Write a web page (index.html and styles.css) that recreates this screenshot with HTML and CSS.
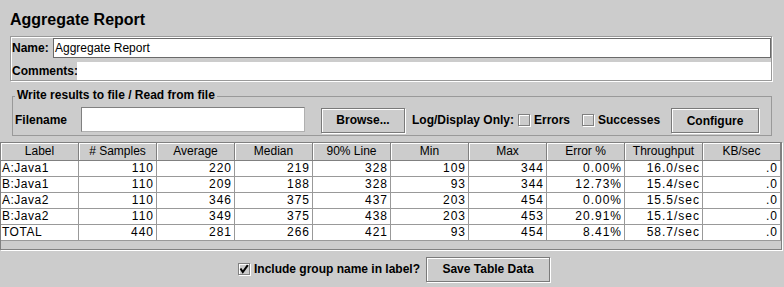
FILE: index.html
```html
<!DOCTYPE html>
<html>
<head>
<meta charset="utf-8">
<title>Aggregate Report</title>
<link rel="stylesheet" href="styles.css">
</head>
<body>
<div class="title">Aggregate Report</div>

<div class="name-panel">
  <div class="row name-row">
    <span class="lbl name-lbl">Name:</span>
    <div class="name-field">Aggregate Report</div>
  </div>
  <div class="row comments-row">
    <span class="lbl comments-lbl">Comments:</span>
    <div class="comments-field"></div>
  </div>
</div>

<fieldset class="file-panel">
  <legend>Write results to file / Read from file</legend>
  <div class="file-row">
    <span class="lbl filename-lbl">Filename</span>
    <div class="file-field"></div>
    <button class="btn browse">Browse...</button>
    <span class="lbl log-lbl">Log/Display Only:</span>
    <span class="check"></span><span class="lbl check-text errors">Errors</span>
    <span class="check"></span><span class="lbl check-text successes">Successes</span>
    <button class="btn configure">Configure</button>
  </div>
</fieldset>

<div class="table-pane">
  <table class="report">
    <colgroup>
      <col class="c"><col class="c"><col class="c"><col class="c"><col class="c">
      <col class="c"><col class="c"><col class="c"><col class="c"><col class="c">
    </colgroup>
    <thead>
      <tr>
        <th>Label</th><th># Samples</th><th>Average</th><th>Median</th><th>90% Line</th>
        <th>Min</th><th>Max</th><th>Error %</th><th>Throughput</th><th>KB/sec</th>
      </tr>
    </thead>
    <tbody>
      <tr><td class="name">A:Java1</td><td>110</td><td>220</td><td>219</td><td>328</td><td>109</td><td>344</td><td>0.00%</td><td>16.0/sec</td><td>.0</td></tr>
      <tr><td class="name">B:Java1</td><td>110</td><td>209</td><td>188</td><td>328</td><td>93</td><td>344</td><td>12.73%</td><td>15.4/sec</td><td>.0</td></tr>
      <tr><td class="name">A:Java2</td><td>110</td><td>346</td><td>375</td><td>437</td><td>203</td><td>454</td><td>0.00%</td><td>15.5/sec</td><td>.0</td></tr>
      <tr><td class="name">B:Java2</td><td>110</td><td>349</td><td>375</td><td>438</td><td>203</td><td>453</td><td>20.91%</td><td>15.1/sec</td><td>.0</td></tr>
      <tr><td class="name">TOTAL</td><td>440</td><td>281</td><td>266</td><td>421</td><td>93</td><td>454</td><td>8.41%</td><td>58.7/sec</td><td>.0</td></tr>
    </tbody>
  </table>
</div>

<div class="bottom-row">
  <span class="check checked"><svg width="10" height="10" viewBox="0 0 10 10"><path d="M1.5 4.5 L3.8 8 L8.8 1.2" fill="none" stroke="#000" stroke-width="2"/></svg></span>
  <span class="lbl group-text">Include group name in label?</span>
  <button class="btn save">Save Table Data</button>
</div>
</body>
</html>
```

FILE: styles.css
```css
html, body {
  margin: 0;
  padding: 0;
  background: #cccccc;
}

body {
  width: 784px;
  height: 287px;
  overflow: hidden;
  font-family: "Liberation Sans", Arial, sans-serif;
  font-size: 12px;
  color: #000;
}

.title {
  font-size: 16px;
  font-weight: bold;
  line-height: 20px;
  height: 20px;
  padding: 10px 0 0 10px;
}

.lbl {
  font-weight: bold;
  white-space: nowrap;
}

/* Name / comments panel */
.name-panel {
  margin: 6px 12px 0 10px;
  border: 1px solid #999999;
  box-shadow: inset 1px 1px 0 #ffffff, 1px 1px 0 #ffffff;
  padding: 1px 0 0 1px;
}

.row {
  display: flex;
  align-items: center;
}

.name-row {
  height: 20px;
}

.comments-row {
  height: 18px;
  margin-top: 4px;
}

.name-lbl {
  width: 41px;
  flex: none;
}

.comments-lbl {
  width: 65px;
  flex: none;
}

.name-field {
  flex: 1;
  height: 20px;
  box-sizing: border-box;
  background: #ffffff;
  border: 1px solid #6a6a6a;
  padding-left: 1px;
  line-height: 18px;
}

.comments-field {
  flex: 1;
  height: 18px;
  background: #ffffff;
}

/* File panel */
.file-panel {
  margin: 8px 12px 0 12px;
  padding: 4px 2px 2px 2px;
  border: 1px solid #999999;
  min-width: 0;
}

.file-panel legend {
  font-weight: bold;
  line-height: 12px;
  padding: 0 2px 2px 2px;
}

.file-row {
  display: flex;
  align-items: center;
  height: 26px;
}

.filename-lbl {
  width: 66px;
  flex: none;
}

.file-field {
  width: 224px;
  height: 25px;
  box-sizing: border-box;
  align-self: flex-start;
  background: #ffffff;
  border: 1px solid;
  border-color: #808080 #b0b0b0 #b0b0b0 #808080;
  flex: none;
}

.btn {
  font-family: "Liberation Sans", Arial, sans-serif;
  font-size: 12px;
  font-weight: bold;
  color: #000;
  background: #cccccc;
  border: 1px solid #7a7a7a;
  box-shadow: inset 1px 1px 0 #ffffff, 1px 1px 0 #ffffff;
  padding: 0;
  height: 25px;
  box-sizing: border-box;
  flex: none;
}

.browse {
  width: 84px;
  margin-left: 16px;
}

.log-lbl {
  width: 106px;
  margin-left: 7px;
  flex: none;
}

.check {
  display: inline-flex;
  align-items: center;
  justify-content: center;
  width: 12px;
  height: 12px;
  box-sizing: border-box;
  border: 1px solid #808080;
  box-shadow: inset 1px 1px 0 #ffffff, 1px 1px 0 #ffffff;
  background: #cccccc;
  flex: none;
}

.check-text {
  margin-left: 4px;
  flex: none;
}

.errors {
  width: 48px;
}

.successes {
  width: 73px;
}

.configure {
  width: 88px;
  margin-top: 1px;
}

/* Table */
.table-pane {
  margin: 6px 2px 0 0;
  height: 106px;
  border: 1px solid #808080;
  box-shadow: 1px 1px 0 #ffffff;
  background: #cccccc;
}

.report {
  border-collapse: separate;
  border-spacing: 0;
  table-layout: fixed;
  width: 780px;
}

.report col.c {
  width: 78px;
}

.report th {
  font-weight: normal;
  text-align: center;
  line-height: 17px;
  padding: 0;
  background: #cccccc;
  border-right: 1px solid #808080;
  border-bottom: 1px solid #808080;
  box-shadow: inset 1px 1px 0 #ffffff;
  white-space: nowrap;
  overflow: hidden;
}

.report td {
  background: #ffffff;
  line-height: 15px;
  padding: 0 2px 0 0;
  text-align: right;
  letter-spacing: 1px;
  border-right: 1px solid #999999;
  border-bottom: 1px solid #999999;
  white-space: nowrap;
  overflow: hidden;
}

.report td.name {
  text-align: left;
  padding: 0 0 0 1px;
  letter-spacing: 0.5px;
}

/* Bottom row */
.bottom-row {
  display: flex;
  justify-content: center;
  align-items: center;
  margin-top: 6px;
  height: 26px;
  padding-left: 4px;
}

.bottom-row .check {
  margin-right: 4px;
}

.group-text {
  margin-right: 6px;
}

.save {
  width: 124px;
}
```
